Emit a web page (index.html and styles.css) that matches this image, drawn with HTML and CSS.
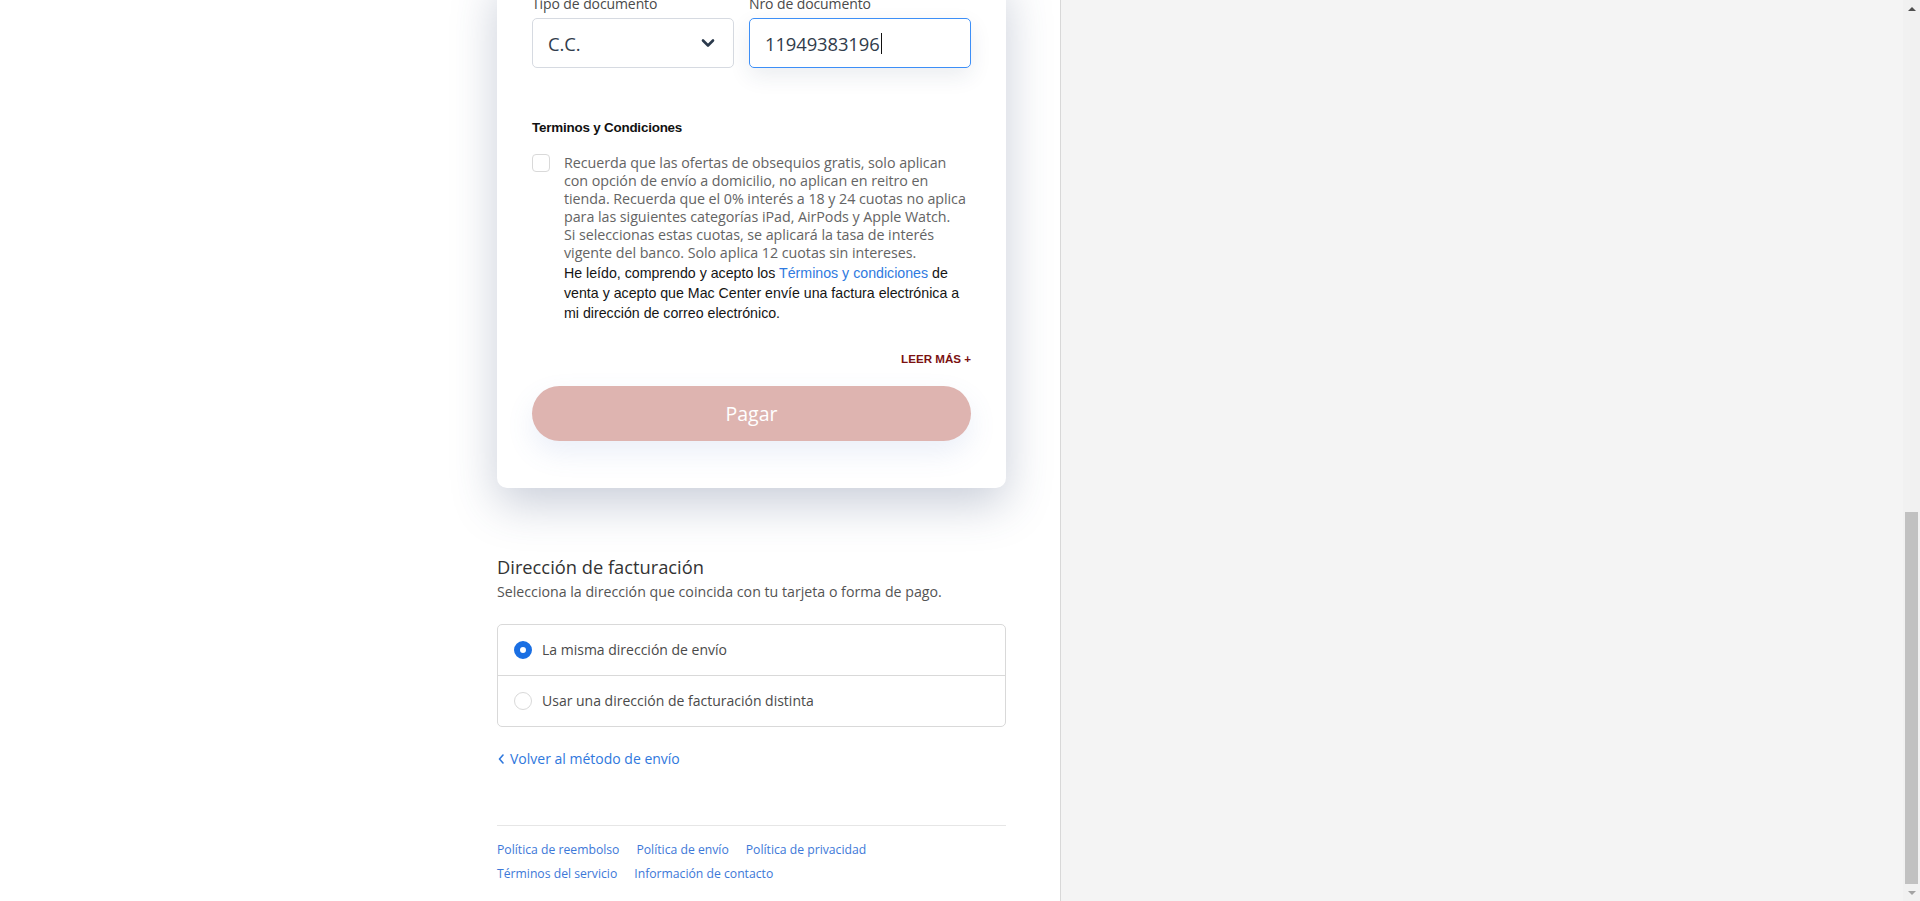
FILE: index.html
```html
<!DOCTYPE html>
<html lang="es">
<head>
<meta charset="utf-8">
<title>Checkout</title>
<link rel="stylesheet" href="styles.css">
</head>
<body>
<div class="page">
  <main class="main">
    <div class="content">
      <section class="card">
        <div class="doc-row">
          <div class="field">
            <label class="field-label">Tipo de documento</label>
            <div class="select">
              <span>C.C.</span>
              <svg class="chev" width="14" height="10" viewBox="0 0 14 10"><path d="M2 2.5 L7 7.5 L12 2.5" fill="none" stroke="#2b3a4c" stroke-width="2.6" stroke-linecap="round" stroke-linejoin="round"/></svg>
            </div>
          </div>
          <div class="field">
            <label class="field-label">Nro de documento</label>
            <div class="input is-focused"><span>11949383196</span><span class="caret"></span></div>
          </div>
        </div>

        <h3 class="terms-title">Terminos y Condiciones</h3>
        <div class="terms">
          <span class="checkbox"></span>
          <div class="terms-text">
            <p class="terms-gray">Recuerda que las ofertas de obsequios gratis, solo aplican<br>con opción de envío a domicilio, no aplican en reitro en<br>tienda. Recuerda que el 0% interés a 18 y 24 cuotas no aplica<br>para las siguientes categorías iPad, AirPods y Apple Watch.<br>Si seleccionas estas cuotas, se aplicará la tasa de interés<br>vigente del banco. Solo aplica 12 cuotas sin intereses.</p>
            <p class="terms-black">He leído, comprendo y acepto los <a class="link" href="#">Términos y condiciones</a> de<br>venta y acepto que Mac Center envíe una factura electrónica a<br>mi dirección de correo electrónico.</p>
          </div>
        </div>
        <div class="more"><a href="#" class="more-link">LEER MÁS +</a></div>
        <button class="pay" type="button">Pagar</button>
      </section>

      <section class="billing">
        <h2 class="billing-title">Dirección de facturación</h2>
        <p class="billing-sub">Selecciona la dirección que coincida con tu tarjeta o forma de pago.</p>
        <div class="options">
          <div class="option">
            <span class="radio is-checked"></span>
            <span class="option-label">La misma dirección de envío</span>
          </div>
          <div class="option">
            <span class="radio"></span>
            <span class="option-label">Usar una dirección de facturación distinta</span>
          </div>
        </div>
        <a class="back" href="#">
          <svg width="8" height="12" viewBox="0 0 8 12"><path d="M6 2 L2.5 6 L6 10" fill="none" stroke="#2f78dd" stroke-width="1.6" stroke-linecap="round" stroke-linejoin="round"/></svg>
          <span>Volver al método de envío</span>
        </a>
      </section>

      <footer class="footer">
        <ul class="footer-row">
          <li><a href="#">Política de reembolso</a></li>
          <li><a href="#">Política de envío</a></li>
          <li><a href="#">Política de privacidad</a></li>
        </ul>
        <ul class="footer-row">
          <li><a href="#">Términos del servicio</a></li>
          <li><a href="#">Información de contacto</a></li>
        </ul>
      </footer>
    </div>
  </main>
  <aside class="sidebar"></aside>
</div>

<div class="scrollbar">
  <span class="sb-up"></span>
  <span class="sb-track"><span class="sb-thumb"></span></span>
  <span class="sb-down"></span>
</div>
</body>
</html>
```

FILE: styles.css
```css
* { box-sizing: border-box; }

html, body {
  margin: 0;
  padding: 0;
  height: 901px;
  overflow: hidden;
  background: #fff;
}

body {
  font-family: "Open Sans", "Noto Sans", sans-serif;
  color: #333;
}

.page {
  display: flex;
  min-height: 901px;
}

.main {
  flex: 0 0 1060px;
  background: #fff;
}

.content {
  margin-left: 497px;
  width: 509px;
  margin-top: -26px;
}

/* card */
.card {
  background: #fff;
  border-radius: 10px;
  padding: 20px 35px 47px 35px;
  box-shadow: 0 16px 46px rgba(55, 75, 115, 0.27);
}

.doc-row {
  display: grid;
  grid-template-columns: 202px 1fr;
  column-gap: 15px;
}

.field-label {
  display: block;
  font-size: 14px;
  line-height: 20px;
  color: #4a4a4a;
  margin-bottom: 4px;
  letter-spacing: -0.1px;
}

.select, .input {
  height: 50px;
  border-radius: 5px;
  display: flex;
  align-items: center;
  font-size: 18.4px;
  color: #313c4c;
  letter-spacing: -0.1px;
}

.select {
  border: 1px solid #d6dae1;
  padding: 0 18px 0 15px;
  justify-content: space-between;
}

.chev { display: block; }

.input {
  border: 1px solid #3d8ff7;
  padding: 0 15px;
  box-shadow: 0 8px 22px rgba(30, 50, 90, 0.09);
}

.caret {
  display: inline-block;
  width: 1px;
  height: 21px;
  background: #111;
  margin-left: 1px;
}

.terms-title {
  margin: 50px 0 0;
  font-family: "Liberation Sans", Arial, sans-serif;
  font-size: 13.4px;
  font-weight: 700;
  line-height: 20px;
  color: #111;
  letter-spacing: -0.2px;
}

.terms {
  margin-top: 16px;
  display: flex;
  gap: 14px;
  align-items: flex-start;
}

.checkbox {
  flex: 0 0 18px;
  width: 18px;
  height: 18px;
  border: 1px solid #d9d9d9;
  border-radius: 4px;
  background: #fff;
}

.terms-text p { margin: 0; white-space: nowrap; }

.terms-gray {
  font-size: 14.3px;
  line-height: 18.1px;
  color: #646464;
  letter-spacing: -0.05px;
}

.terms-black {
  font-family: "Liberation Sans", Arial, sans-serif;
  font-size: 14.2px;
  line-height: 20px;
  color: #151515;
}

.link {
  color: #2f7ae0;
  text-decoration: none;
}

.more {
  margin-top: 28px;
  display: flex;
  justify-content: flex-end;
  line-height: 16px;
}

.more-link {
  font-family: "Liberation Sans", Arial, sans-serif;
  font-size: 11.6px;
  font-weight: 700;
  color: #7b1111;
  text-decoration: none;
}

.pay {
  display: block;
  width: 100%;
  margin-top: 19px;
  height: 55px;
  border: 0;
  border-radius: 28px;
  background: #deb4b0;
  color: #fff;
  font-family: "Open Sans", "Noto Sans", sans-serif;
  font-size: 19.5px;
  box-shadow: 0 12px 28px rgba(90, 120, 200, 0.12);
}

/* billing */
.billing-title {
  margin: 67px 0 0;
  font-size: 18.3px;
  font-weight: 400;
  line-height: 24px;
  color: #333;
}

.billing-sub {
  margin: 3px 0 0;
  font-size: 14.2px;
  line-height: 20px;
  color: #545454;
}

.options {
  margin-top: 22px;
  border: 1px solid #d9d9d9;
  border-radius: 5px;
}

.option {
  height: 50px;
  display: flex;
  align-items: center;
  padding-left: 16px;
  gap: 10px;
}

.option + .option {
  border-top: 1px solid #d9d9d9;
  height: 51px;
}

.radio {
  width: 18px;
  height: 18px;
  border-radius: 50%;
  border: 1px solid #d9d9d9;
  background: #fff;
  flex: 0 0 18px;
}

.radio.is-checked {
  border: 6.5px solid #1a6fe3;
  background: #fff;
}

.option-label {
  font-size: 14px;
  color: #4a4a4a;
}

.back {
  margin-top: 22px;
  display: flex;
  align-items: center;
  gap: 5px;
  height: 20px;
  color: #2f78dd;
  text-decoration: none;
  font-size: 14px;
}

.back svg { display: block; }

.footer {
  margin-top: 56px;
  border-top: 1px solid #e6e6e6;
  padding-top: 15px;
}

.footer-row {
  list-style: none;
  margin: 0;
  padding: 0;
  display: flex;
  gap: 17px;
  font-size: 12.2px;
  line-height: 18px;
}

.footer-row + .footer-row { margin-top: 6px; }

.footer-row a {
  color: #3d78d8;
  text-decoration: none;
}

/* sidebar */
.sidebar {
  flex: 1;
  background: #f4f4f4;
  border-left: 1px solid #d8d8d8;
}

/* fake browser scrollbar (overlay) */
.scrollbar {
  position: fixed;
  top: 0;
  right: 0;
  width: 17px;
  height: 901px;
  background: #f1f1f1;
  display: flex;
  flex-direction: column;
}

.sb-up, .sb-down {
  height: 17px;
  flex: 0 0 17px;
  display: flex;
  align-items: center;
  justify-content: center;
}

.sb-up::before {
  content: "";
  border-left: 4px solid transparent;
  border-right: 4px solid transparent;
  border-bottom: 4px solid #505050;
}

.sb-down::before {
  content: "";
  border-left: 4px solid transparent;
  border-right: 4px solid transparent;
  border-top: 4px solid #a3a3a3;
}

.sb-track {
  flex: 1;
  display: flex;
  flex-direction: column;
  justify-content: flex-end;
  padding: 0 2px;
}

.sb-thumb {
  height: 372px;
  background: #c1c1c1;
}
```
